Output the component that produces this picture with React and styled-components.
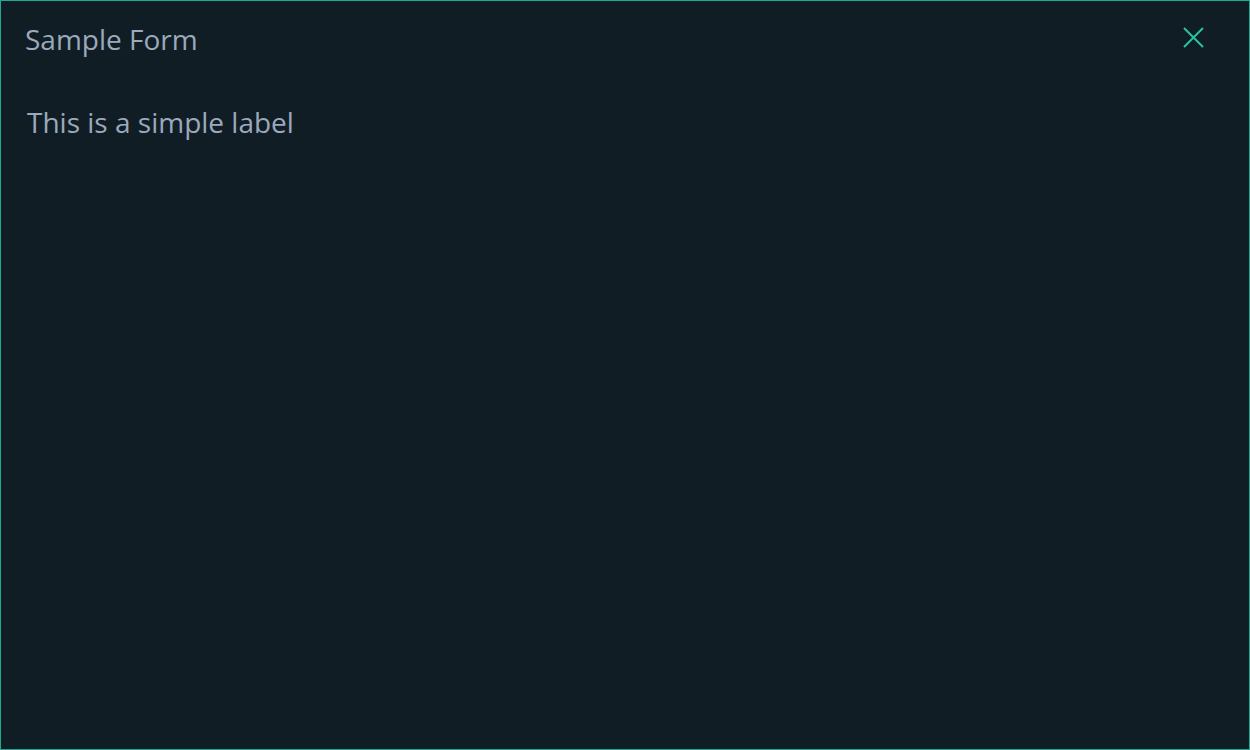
import styled, { createGlobalStyle } from "styled-components";

const Global = createGlobalStyle`
	html, body {
		margin: 0;
		padding: 0;
		background: #111d25;
	}
`;

const Frame = styled.div`
	box-sizing: border-box;
	width: 1250px;
	height: 750px;
	border: 1px solid #1fa893;
	background: #111d25;
	font-family: "Open Sans", "Noto Sans", sans-serif;
	color: #9ba9bc;
	display: flex;
	flex-direction: column;
`;

const TitleBar = styled.div`
	display: flex;
	align-items: flex-start;
	justify-content: space-between;
	padding: 19px 45px 0 24px;
`;

const Title = styled.h1`
	margin: 0;
	font-size: 28px;
	line-height: 38px;
	font-weight: 400;
`;

const CloseButton = styled.button`
	background: none;
	border: 0;
	padding: 0;
	margin-top: 7px;
	width: 21px;
	height: 21px;
	display: flex;
	cursor: pointer;
`;

const Body = styled.div`
	padding: 45px 26px 0;
`;

const Label = styled.p`
	margin: 0;
	font-size: 28px;
	line-height: 38px;
`;

const App = () => {
	return (
		<>
			<Global />
			<Frame>
				<TitleBar>
					<Title>Sample Form</Title>
					<CloseButton aria-label="close">
						<svg width="21" height="21" viewBox="0 0 21 21">
							<path d="M1 1 L20 20 M20 1 L1 20" stroke="#2bbfa4" strokeWidth="2" fill="none" />
						</svg>
					</CloseButton>
				</TitleBar>
				<Body>
					<Label>This is a simple label</Label>
				</Body>
			</Frame>
		</>
	);
};

export default App;
